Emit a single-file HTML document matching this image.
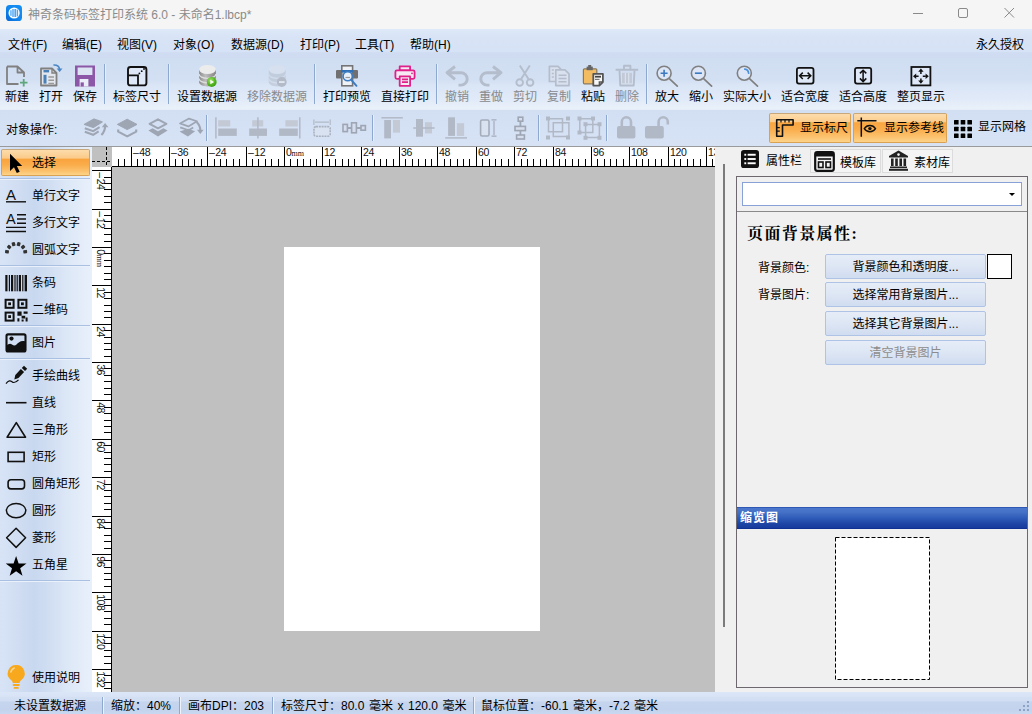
<!DOCTYPE html>
<html lang="zh-CN">
<head>
<meta charset="utf-8">
<title>神奇条码标签打印系统 6.0</title>
<style>
*{box-sizing:border-box;margin:0;padding:0}
html,body{width:1032px;height:714px;overflow:hidden}
body{position:relative;font-family:"Liberation Sans","Noto Sans CJK SC",sans-serif;font-size:12px;color:#000;background:#d4e1f4;}
.abs{position:absolute}
svg{display:block}
#title{left:0;top:0;width:1032px;height:29px;background:#f4f5f4}
#title .t{position:absolute;left:28px;top:6px;font-size:12px;color:#8a8a8a;line-height:18px;white-space:nowrap}
#menu{left:0;top:29px;width:1032px;height:29px;background:linear-gradient(#dde8f8 0,#d8e4f6 30%,#d6e2f5 78%,#cfdcf1 82%,#cedbf1 100%)}
#menu span{position:absolute;top:7px;line-height:18px;white-space:nowrap}
#tb1{left:0;top:58px;width:1032px;height:52px;background:linear-gradient(#d0def2 0,#d3e0f3 42%,#dae5f6 52%,#e1eaf8 80%,#e9f0fa 95%,#e6eef9 100%)}
.tbtn{position:absolute;top:0;height:52px;white-space:nowrap}
.tbtn .lb{position:absolute;left:-20px;right:-20px;top:31px;line-height:17px;text-align:center}
.tbtn svg{position:absolute;left:50%;top:7px;margin-left:-12px}
.dis{color:#878a8e}
.sep{position:absolute;top:6px;width:1px;height:40px;background:#8ea9d0;box-shadow:1px 0 0 #e8eff9}
#tb2{left:0;top:110px;width:1032px;height:36px;background:linear-gradient(#d2dff3 0,#d5e1f4 60%,#d7e3f5 100%)}
#tb2 .lab{position:absolute;left:6px;top:11px;line-height:18px}
.sep2{position:absolute;top:5px;width:1px;height:26px;background:#8ea9d0;box-shadow:1px 0 0 #e8eff9}
.obtn{position:absolute;top:3px;height:30px;border:1px solid #d9a253;border-top-color:#c7a77c;border-radius:2px;background:linear-gradient(#fcdcab 0,#fbcd8e 28%,#f9a640 31%,#faad4c 55%,#fcc572 85%,#fdd48a 100%)}
.obtn .lb,.pbtn .lb{position:absolute;top:5px;line-height:18px;white-space:nowrap}
.pbtn{position:absolute;top:3px;height:31px}
#topline{left:0;top:146px;width:1032px;height:1px;background:#9a9a9a}
#left{left:0;top:146px;width:92px;height:546px;background:linear-gradient(90deg,#d8e4f6 0,#d0ddf2 20%,#c8d8ef 37%,#d2dff3 56%,#dde8f7 74%,#e8f0fa 100%)}
.li{position:absolute;left:0;width:92px;height:27px}
.li .lb{position:absolute;left:32px;top:6px;line-height:18px;white-space:nowrap}
.li svg{position:absolute;left:3px;top:1px}
.hsep{position:absolute;left:0;width:90px;height:2px;background:linear-gradient(#a9c0e2 0,#a9c0e2 50%,#eaf1fa 50%,#eaf1fa 100%)}
.selbtn{position:absolute;left:1px;top:3px;width:89px;height:27px;border:1px solid #d9a253;border-top-color:#c7a77c;border-radius:2px;background:linear-gradient(#fcdcab 0,#fbca88 33%,#f9a33c 36%,#faad4c 60%,#fcc572 88%,#fdd48a 100%)}
#canvas{left:112px;top:167px;width:603px;height:525px;background:#c0c0c0}
#page{left:284px;top:247px;width:256px;height:384px;background:#fff}
#status{left:0;top:692px;width:1032px;height:22px;background:linear-gradient(#dbe6f7 0,#d8e4f6 20%,#d3e0f4 24%,#d1def3 40%,#c5d5ee 46%,#c3d3ed 80%,#c9d8f0 100%)}
#status span{position:absolute;top:5px;line-height:18px;white-space:nowrap;word-spacing:1.2px}
#status i{position:absolute;top:5px;width:1px;height:17px;background:#8ea9d0;box-shadow:1px 0 0 #eef3fb}
#right{left:715px;top:147px;width:317px;height:545px;background:#f0f0f0}
#right .split{position:absolute;left:8px;top:17px;width:2px;height:463px;background:#7b7b7b}
.tab{position:absolute;top:2px;height:24px;border:1px solid #dcdcdc;background:#f4f4f4}
.tab.act{border-color:transparent;background:transparent}
.tab .lb{position:absolute;line-height:18px;white-space:nowrap;font-size:12px}
.tab svg{position:absolute}
#box{position:absolute;left:21px;top:29px;width:292px;height:512px;border:1px solid #6c686e;}
#combo{position:absolute;left:27px;top:35px;width:280px;height:24px;background:#fff;border:1px solid #88a1d6}
#combo:after{content:"";position:absolute;right:6px;top:10px;border:3px solid transparent;border-top:3px solid #000;border-bottom:0}
#hline{position:absolute;left:22px;top:64px;width:290px;height:1px;background:#8a8a8a}
.h1{position:absolute;left:32px;top:75px;font:bold 16px/24px "Liberation Serif","Noto Serif CJK SC",serif;white-space:nowrap;letter-spacing:1.4px}
.plab{position:absolute;left:43px;line-height:18px;white-space:nowrap}
.btn{position:absolute;left:110px;width:161px;height:25px;border:1px solid #aec3e6;border-radius:2px;background:linear-gradient(#e6edf8 0,#dde6f4 50%,#d0dcf0 100%);text-align:center;line-height:25px;white-space:nowrap}
.btn.d{color:#8c8c8c}
#swatch{position:absolute;left:272px;top:107px;width:25px;height:25px;background:#fff;border:1px solid #000}
#thdr{position:absolute;left:22px;top:360px;width:290px;height:22px;background:linear-gradient(#2248aa 0,#4a78cc 7%,#4470c6 25%,#2f5cb8 50%,#1d44a4 78%,#173c9e 93%,#0c2c90 100%);color:#fff;font:bold 12px/20px "Liberation Sans","Noto Sans CJK SC",sans-serif;padding:1px 0 0 3px;letter-spacing:1px}
#thumb{position:absolute;left:120px;top:390px}
</style>
</head>
<body>
<div id="title" class="abs">
<svg class="abs" style="left:6px;top:5px" width="16" height="16" viewBox="0 0 16 16"><defs><linearGradient id="lg" x1="1" y1="0" x2="0" y2="1"><stop offset="0" stop-color="#1690f4"/><stop offset=".55" stop-color="#1186ee"/><stop offset="1" stop-color="#0868d4"/></linearGradient></defs><rect width="16" height="16" rx="3.600" fill="url(#lg)"/><circle cx="8.100" cy="8" r="5.600" fill="#fff"/><g fill="#49a4f4"><rect x="4.300" y="5.200" width="1.300" height="5.600"/><rect x="6.300" y="4" width="1.400" height="8"/><rect x="8.400" y="4" width="1.800" height="8"/><rect x="10.800" y="4.600" width="1.300" height="6.800"/></g></svg>
<div class="t">神奇条码标签打印系统 6.0 - 未命名1.lbcp*</div>
<svg class="abs" style="left:900px;top:0" width="132" height="29" viewBox="0 0 132 29"><g stroke="#8a8a8a" stroke-width="1" fill="none"><path d="M13 13.500h10"/><rect x="58.500" y="8.500" width="9" height="9" rx="1.500"/><path d="M104.500 8l9.500 9.500M114 8l-9.500 9.500"/></g></svg>
</div>
<div id="menu" class="abs">
<span style="left:8px">文件(F)</span><span style="left:62px">编辑(E)</span><span style="left:117px">视图(V)</span><span style="left:173px">对象(O)</span><span style="left:231px">数据源(D)</span><span style="left:300px">打印(P)</span><span style="left:355px">工具(T)</span><span style="left:410px">帮助(H)</span><span style="left:976px">永久授权</span>
</div>
<div id="tb1" class="abs">
<svg class="abs" style="left:0;top:0" width="1032" height="52" viewBox="0 58 1032 52"><path d="M7 66.500h10.500l6.500 6v4.500M17.500 66.500v6h6.500M7 66.500v17.500h11.500" fill="none" stroke="#808080" stroke-width="1.800" stroke-linejoin="round"/><path d="M23.700 79v7.500M20 82.700h7.500" stroke="#5fa67e" stroke-width="1.800" fill="none"/><path d="M41 68.500h11l4.500 4.500v12.500h-15.500z" fill="#e3e6ec" stroke="#808080" stroke-width="1.800" stroke-linejoin="round"/><path d="M52 68.500v4.500h4.500" fill="none" stroke="#808080" stroke-width="1.400"/><rect x="43.500" y="70" width="5.600" height="2.400" fill="#4a80b8"/><rect x="43.500" y="74.800" width="3" height="8.800" fill="#4a80b8"/><path d="M48.400 77h5.600M48.400 80.300h5.600M48.400 83.400h5.600" stroke="#9a9a9a" stroke-width="1.400"/><path d="M53.400 64.900q5.800 -.3 6.100 4.200" fill="none" stroke="#4a86c4" stroke-width="1.500"/><path d="M56.700 68.600h5.800l-2.900 3.500z" fill="#4a86c4"/><rect x="75" y="65.500" width="20" height="21" fill="#8b57a6"/><rect x="77.600" y="67.500" width="14.800" height="7.500" fill="#dbe4f3"/><rect x="79.600" y="79" width="8.800" height="7.500" fill="#e9eef8"/><rect x="80.600" y="82.400" width="3.200" height="4.100" fill="#8b57a6"/><rect x="128" y="67" width="18.400" height="18.400" rx="2.500" fill="#dfe8f7" stroke="#111" stroke-width="1.900"/><path d="M128 75.400h10v10" fill="none" stroke="#111" stroke-width="1.800"/><circle cx="139.400" cy="73.400" r=".9" fill="#111"/><circle cx="141.700" cy="71.200" r=".9" fill="#111"/><circle cx="144" cy="69" r=".9" fill="#111"/><defs><linearGradient id="cy"><stop offset="0" stop-color="#8b8b8b"/><stop offset=".38" stop-color="#bdbdbd"/><stop offset="1" stop-color="#858585"/></linearGradient><radialGradient id="gb" cx=".4" cy=".35" r=".7"><stop offset="0" stop-color="#a6e36e"/><stop offset=".6" stop-color="#55b822"/><stop offset="1" stop-color="#3c9a10"/></radialGradient></defs><g opacity="1"><path d="M199.1 69.500v12.500c0 2.600 3.800 4.400 8.400 4.400s8.400 -1.800 8.400 -4.400v-12.500z" fill="url(#cy)"/><path d="M199.1 74c0 2.600 3.800 4.400 8.400 4.400s8.400 -1.800 8.400 -4.400M199.1 78.500c0 2.600 3.800 4.400 8.400 4.400s8.400 -1.800 8.400 -4.400" fill="none" stroke="#dedede" stroke-width="1.300"/><ellipse cx="207.5" cy="69.500" rx="8.400" ry="4.500" fill="#ececec"/></g><circle cx="211.700" cy="82" r="4.900" fill="url(#gb)"/><path d="M210.300 79.700l3.800 2.300l-3.800 2.300z" fill="#fff"/><g opacity="0.42"><path d="M268.8 69.500v12.500c0 2.600 3.800 4.400 8.400 4.400s8.400 -1.800 8.400 -4.400v-12.500z" fill="#aab2c0"/><path d="M268.8 74c0 2.600 3.800 4.400 8.400 4.400s8.400 -1.800 8.400 -4.400M268.8 78.500c0 2.600 3.800 4.400 8.400 4.400s8.400 -1.800 8.400 -4.400" fill="none" stroke="#cfd5e0" stroke-width="1.300"/><ellipse cx="277.2" cy="69.500" rx="8.400" ry="4.500" fill="#dde2ea"/></g><circle cx="281.800" cy="82" r="4.900" fill="#b3bbc8"/><rect x="279" y="81.200" width="5.600" height="1.700" fill="#e8ecf3"/><rect x="336" y="70" width="22" height="8.600" rx="1" fill="#707070"/><rect x="341.800" y="65.800" width="10.800" height="20" fill="#eef1f6" stroke="#757575" stroke-width="1.600"/><rect x="341" y="70" width="12.400" height="2.600" fill="#2f6fb5"/><circle cx="347.700" cy="76.200" r="4.600" fill="#e8f0fa" stroke="#3a7cc4" stroke-width="1.600"/><path d="M345.500 77.500h4.500" stroke="#9a9a9a" stroke-width="1.200"/><path d="M351 79.600l5.500 6.200" stroke="#3a7cc4" stroke-width="1.900" stroke-linecap="round"/><g fill="#f6e9f3" stroke="#e0218a" stroke-width="1.800" stroke-linejoin="round"><rect x="399.700" y="66.400" width="10.400" height="4"/><rect x="395.400" y="70.400" width="19.200" height="8.400" rx="1.500"/><rect x="399.700" y="76.400" width="10.400" height="9.400"/></g><path d="M402 79.400h6M402 82.200h6" stroke="#e0218a" stroke-width="1.700"/><circle cx="412" cy="73.300" r=".9" fill="#e0218a"/><path d="M455 66.500l-8 6.200l8 6.600M447.500 72.700h13.500a6.200 6.200 0 0 1 0 12.400h-2.500" fill="none" stroke="#b4bdcb" stroke-width="2.900" stroke-linejoin="round"/><path d="M493 66.500l8 6.200l-8 6.600M500.500 72.700h-13.500a6.200 6.200 0 0 0 0 12.400h2.500" fill="none" stroke="#b4bdcb" stroke-width="2.900" stroke-linejoin="round"/><g fill="none" stroke="#b4bdcb" stroke-width="1.900"><path d="M519.800 65.500l8.700 13.500M529.800 65.500l-8.700 13.500"/><circle cx="519.700" cy="82.500" r="3.300"/><circle cx="530.100" cy="82.500" r="3.300"/></g><g fill="#d9e1ef" stroke="#b4bdcb" stroke-width="1.700" stroke-linejoin="round"><path d="M549.400 66.300h8.600l3 3v12.200h-11.600z"/><path d="M555.800 69.800h9.200l4 4v11.800h-13.200z"/></g><path d="M558.500 75.200h8M558.500 78.500h8M558.500 81.800h8" stroke="#b4bdcb" stroke-width="1.400"/><path d="M551.800 70h2M551.800 73.500h2M551.800 77h2" stroke="#b4bdcb" stroke-width="1.300"/><rect x="583.400" y="68.800" width="13.400" height="15" rx="1" fill="#f3bc63" stroke="#8a7a5a" stroke-width="1.200"/><rect x="586.600" y="66.600" width="6.200" height="3.600" fill="#666"/><rect x="588.200" y="65" width="3" height="2.400" fill="#666"/><path d="M593.300 73.800h9.600v8.200l-3.600 3.600h-6z" fill="#f7f7f7" stroke="#555" stroke-width="1.800" stroke-linejoin="round"/><path d="M602.900 82h-3.600v3.600" fill="none" stroke="#555" stroke-width="1.300"/><path d="M595 76.700h6" stroke="#444" stroke-width="1.800"/><path d="M595 79.400h4.500" stroke="#777" stroke-width="1.200"/><g fill="none" stroke="#b4bdcb" stroke-width="1.900" stroke-linejoin="round"><path d="M615.600 69.800h22.600M624 69.300v-3.500h6.400v3.500"/><path d="M619.500 70.500l.8 15h13.400l.8 -15"/></g><rect x="622" y="72.800" width="10" height="10.600" fill="#c3cad7"/><path d="M625.400 73v10.400M628.700 73v10.400" stroke="#dbe2ee" stroke-width="1.200"/><circle cx="664.1" cy="73.200" r="7" fill="#dce6f6" stroke="#808080" stroke-width="1.600"/><path d="M669.3000000000001 78.600l8 7.500" stroke="#808080" stroke-width="1.700" stroke-linecap="round"/><path d="M660.600 73.200h7M664.100 69.700v7" stroke="#3a78c0" stroke-width="1.600"/><circle cx="698.4" cy="73.200" r="7" fill="#dce6f6" stroke="#808080" stroke-width="1.600"/><path d="M703.6 78.600l8 7.500" stroke="#808080" stroke-width="1.700" stroke-linecap="round"/><path d="M694.900 73.200h7" stroke="#3a78c0" stroke-width="1.600"/><circle cx="744.3" cy="73.200" r="7" fill="#dce6f6" stroke="#808080" stroke-width="1.600"/><path d="M749.5 78.600l8 7.500" stroke="#808080" stroke-width="1.700" stroke-linecap="round"/><path d="M744.800 69.200a4.300 4.300 0 0 1 3.800 4" fill="none" stroke="#4a8fdc" stroke-width="1.700" stroke-linecap="round"/><rect x="796.900" y="67.800" width="16.600" height="15.800" rx="2" fill="#dfe8f7" stroke="#111" stroke-width="1.800"/><path d="M800 75.800h10.500M802.800 72.600l-3.200 3.200l3.200 3.200M807.600 72.600l3.200 3.200l-3.200 3.200" fill="none" stroke="#111" stroke-width="1.500"/><rect x="855" y="67.800" width="16.200" height="15.800" rx="2" fill="#dfe8f7" stroke="#111" stroke-width="1.800"/><path d="M863.100 70.600v10.600M859.900 73.400l3.200 -3.200l3.200 3.200M859.900 78.400l3.200 3.200l3.200 -3.200" fill="none" stroke="#111" stroke-width="1.500"/><rect x="911.400" y="67" width="19" height="18.400" fill="#dfe8f7" stroke="#111" stroke-width="1.800"/><path d="M920.900 68.600l2.700 3.200h-5.400zM920.900 83.800l2.700 -3.200h-5.400zM913 76.200l3.200 -2.700v5.400zM928.800 76.200l-3.200 -2.700v5.400z" fill="#111"/><path d="M920.900 71v3M920.900 78.400v3M915.600 76.200h3M922.800 76.200h3" stroke="#111" stroke-width="1.500"/></svg>
<div class="tbtn" style="left:0px;width:34px"><div class="lb">新建</div></div>
<div class="tbtn" style="left:34px;width:34px"><div class="lb">打开</div></div>
<div class="tbtn" style="left:68px;width:34px"><div class="lb">保存</div></div>
<div class="sep" style="left:104px"></div>
<div class="tbtn" style="left:108px;width:58px"><div class="lb">标签尺寸</div></div>
<div class="sep" style="left:168px"></div>
<div class="tbtn" style="left:172px;width:70px"><div class="lb">设置数据源</div></div>
<div class="tbtn dis" style="left:242px;width:70px"><div class="lb">移除数据源</div></div>
<div class="sep" style="left:314px"></div>
<div class="tbtn" style="left:318px;width:58px"><div class="lb">打印预览</div></div>
<div class="tbtn" style="left:376px;width:58px"><div class="lb">直接打印</div></div>
<div class="sep" style="left:436px"></div>
<div class="tbtn dis" style="left:440px;width:34px"><div class="lb">撤销</div></div>
<div class="tbtn dis" style="left:474px;width:34px"><div class="lb">重做</div></div>
<div class="tbtn dis" style="left:508px;width:34px"><div class="lb">剪切</div></div>
<div class="tbtn dis" style="left:542px;width:34px"><div class="lb">复制</div></div>
<div class="tbtn" style="left:576px;width:34px"><div class="lb">粘贴</div></div>
<div class="tbtn dis" style="left:610px;width:34px"><div class="lb">删除</div></div>
<div class="sep" style="left:646px"></div>
<div class="tbtn" style="left:650px;width:34px"><div class="lb">放大</div></div>
<div class="tbtn" style="left:684px;width:34px"><div class="lb">缩小</div></div>
<div class="tbtn" style="left:718px;width:58px"><div class="lb">实际大小</div></div>
<div class="tbtn" style="left:776px;width:58px"><div class="lb">适合宽度</div></div>
<div class="tbtn" style="left:834px;width:58px"><div class="lb">适合高度</div></div>
<div class="tbtn" style="left:892px;width:58px"><div class="lb">整页显示</div></div>
</div>
<div id="tb2" class="abs">
<div class="lab">对象操作:</div>
<svg class="abs" style="left:0;top:0" width="700" height="36" viewBox="0 110 700 36"><path d="M84.600 124.400l9.400 -5.200l8 2.800l-8.800 5.400z" fill="#9ea6b4" stroke="#9ea6b4" stroke-width="1.400" stroke-linejoin="round"/><path d="M84.800 128.200l8.400 3l6.400 -4M84.800 131.800l8.400 3l5.400 -3.400" fill="none" stroke="#9ea6b4" stroke-width="2"/><path d="M101.400 135c2.600 -2.600 3.700 -5.200 3.700 -9" fill="none" stroke="#9ea6b4" stroke-width="2.100"/><path d="M101.800 127.200l3.300 -4.200l3.300 4.200z" fill="#9ea6b4"/><path d="M117.400 124.400l9.800 -5.200l9.800 5.200l-9.800 5.200z" fill="#9ea6b4" stroke="#9ea6b4" stroke-width="1" stroke-linejoin="round"/><path d="M118.200 129.600v2l9 4.800l9 -4.800v-2" fill="none" stroke="#9ea6b4" stroke-width="2.200" stroke-linejoin="round"/><path d="M149.600 123.800l8.400 -4.500l8.400 4.500l-8.400 4.500z" fill="none" stroke="#9ea6b4" stroke-width="2" stroke-linejoin="round"/><path d="M148.400 130.400l4.200 -2.200l5.400 3l5.400 -3l4.200 2.200l-9.600 6.200z" fill="#9ea6b4"/><path d="M180 123.400l9 -4.800l8 2.600l-8.600 5.200zM180.200 127.400l8.400 2.800l4.600 -2.800" fill="none" stroke="#9ea6b4" stroke-width="1.700" stroke-linejoin="round"/><path d="M179.600 131.400l8.500 -2.600l7 2.400l-7.200 5.200z" fill="#9ea6b4"/><path d="M196.600 122c2.600 2.400 3.700 4.800 3.700 8.400" fill="none" stroke="#9ea6b4" stroke-width="2.100"/><path d="M197 129.800l3.300 4.200l3.300 -4.200z" fill="#9ea6b4"/><path d="M215.900 117.300v21.200" stroke="#b2b9c6" stroke-width="1.500"/><rect x="218.200" y="120.200" width="12" height="6.300" fill="#c3c9d5"/><rect x="218.200" y="128.500" width="18.600" height="7.400" fill="#b2b9c6"/><rect x="252.200" y="120.200" width="11" height="6.300" fill="#c3c9d5"/><rect x="249.200" y="128.500" width="17.800" height="7.400" fill="#b2b9c6"/><path d="M257.900 117.300v21.200" stroke="#b2b9c6" stroke-width="1.500"/><path d="M299.800 117.300v21.200" stroke="#b2b9c6" stroke-width="1.500"/><rect x="285.400" y="120.200" width="12.400" height="6.300" fill="#c3c9d5"/><rect x="279.200" y="128.500" width="18.600" height="7.400" fill="#b2b9c6"/><path d="M313.900 119.500v5.500M330.200 119.500v5.500M315 122.200h14" stroke="#b2b9c6" stroke-width="1.200" fill="none"/><rect x="314" y="126.600" width="16.200" height="9.600" rx="2" fill="#d9e2f1" stroke="#a9b1be" stroke-width="1.600" stroke-dasharray="2 .8"/><g fill="#d5deee" stroke="#9ea6b4" stroke-width="1.600"><rect x="343" y="124.400" width="4.400" height="7.200"/><rect x="351.600" y="122.800" width="4.800" height="10"/><rect x="361" y="125.600" width="4.400" height="4.600"/></g><path d="M347.400 128h4.200M356.400 128h4.600" stroke="#9ea6b4" stroke-width="1.800"/><path d="M381.400 117.800h21.400" stroke="#b2b9c6" stroke-width="1.500"/><rect x="384.200" y="120" width="6.800" height="18.400" fill="#b2b9c6"/><rect x="393" y="120" width="7" height="12.600" fill="#c3c9d5"/><rect x="416" y="119" width="7" height="17.700" fill="#b2b9c6"/><rect x="425" y="122.200" width="7" height="11.200" fill="#c3c9d5"/><path d="M413.200 128h21.400" stroke="#b2b9c6" stroke-width="1.500"/><path d="M445.200 137.900h21.800" stroke="#b2b9c6" stroke-width="1.500"/><rect x="448.100" y="117.300" width="6.900" height="18.600" fill="#b2b9c6"/><rect x="456.900" y="123.200" width="7.200" height="12.700" fill="#c3c9d5"/><rect x="480.600" y="120" width="8.400" height="16" rx="1.500" fill="#d9e2f1" stroke="#a4acba" stroke-width="1.600"/><path d="M491.500 119.800h5M491.500 136.200h5M494 121v14" stroke="#a4acba" stroke-width="1.200" fill="none"/><g fill="#d5deee" stroke="#9ea6b4" stroke-width="1.600"><rect x="518.200" y="117.200" width="4.600" height="4"/><rect x="515" y="126.400" width="10.400" height="4.200"/><rect x="516.600" y="135" width="7.800" height="4"/></g><path d="M520.400 121.200v5.200M520.400 130.600v4.400" stroke="#9ea6b4" stroke-width="1.800"/><path d="M548.500 118.800h14v13h-14zM553.300 122.800h15.600v13.800h-15.600z" fill="none" stroke="#b2b9c6" stroke-width="1.500"/><rect x="546" y="116.5" width="4" height="4" fill="#b2b9c6"/><rect x="566" y="116.5" width="4" height="4" fill="#b2b9c6"/><rect x="546" y="135.5" width="4" height="4" fill="#b2b9c6"/><rect x="566" y="135.5" width="4" height="4" fill="#b2b9c6"/><path d="M579.800 118.800h13v13.800h-13zM585.600 124.400h13.800v13h-13.800z" fill="none" stroke="#b2b9c6" stroke-width="1.500"/><rect x="577.5" y="116.5" width="4" height="4" fill="#b2b9c6"/><rect x="591" y="116.5" width="4" height="4" fill="#b2b9c6"/><rect x="577.5" y="130.5" width="4" height="4" fill="#b2b9c6"/><rect x="583.5" y="122.2" width="4" height="4" fill="#b2b9c6"/><rect x="597.5" y="122.2" width="4" height="4" fill="#b2b9c6"/><rect x="583.5" y="135.8" width="4" height="4" fill="#b2b9c6"/><rect x="597.5" y="135.8" width="4" height="4" fill="#b2b9c6"/><path d="M621.800 126v-4.200a4.600 4.600 0 0 1 9.200 0v4.200" fill="none" stroke="#b2b9c6" stroke-width="2.600"/><rect x="617" y="126" width="18.400" height="12.600" rx="2" fill="#b2b9c6"/><path d="M658.600 126v-4.200a4.600 4.600 0 0 1 9.200 0v2.800" fill="none" stroke="#b2b9c6" stroke-width="2.600"/><rect x="645" y="126" width="18.800" height="12.600" rx="2" fill="#b2b9c6"/></svg>
<div class="sep2" style="left:206px"></div>
<div class="sep2" style="left:372px"></div>
<div class="sep2" style="left:538px"></div>
<div class="sep2" style="left:606px"></div>
<div class="obtn" style="left:769px;width:82px"><svg class="abs" style="left:0;top:0" width="40" height="31" viewBox="770 114 40 31"><path d="M776.700 119.800h16.400v5.200h-10.600v11.200h-5.800z" fill="none" stroke="#111" stroke-width="1.600" stroke-linejoin="round"/><path d="M781 120v2.600M785 120v2.600M789 120v2.600M777 127.600h2.800M777 131.200h2.800" stroke="#111" stroke-width="1.200"/></svg><div class="lb" style="left:30px">显示标尺</div></div>
<div class="obtn" style="left:853px;width:94px"><svg class="abs" style="left:0;top:0" width="40" height="31" viewBox="854 114 40 31"><path d="M857.300 120.700h19.200M861.300 117.400v19.400" stroke="#111" stroke-width="1.500"/><path d="M864.300 128.600c2.600 -4.200 8.600 -4.200 11.200 0c-2.600 4.200 -8.600 4.200 -11.200 0z" fill="none" stroke="#111" stroke-width="1.400"/><circle cx="869.900" cy="128.600" r="1.700" fill="#111"/></svg><div class="lb" style="left:30px">显示参考线</div></div>
<div class="pbtn" style="left:950px;width:80px"><svg class="abs" style="left:4px;top:6.500px" width="18" height="18" viewBox="0 0 18 18"><g fill="#000"><rect x="0" y="0" width="4.600" height="4.600" rx=".5"/><rect x="6.7" y="0" width="4.600" height="4.600" rx=".5"/><rect x="13.4" y="0" width="4.600" height="4.600" rx=".5"/><rect x="0" y="6.7" width="4.600" height="4.600" rx=".5"/><rect x="6.7" y="6.7" width="4.600" height="4.600" rx=".5"/><rect x="13.4" y="6.7" width="4.600" height="4.600" rx=".5"/><rect x="0" y="13.4" width="4.600" height="4.600" rx=".5"/><rect x="6.7" y="13.4" width="4.600" height="4.600" rx=".5"/><rect x="13.4" y="13.4" width="4.600" height="4.600" rx=".5"/></g></svg><div class="lb" style="left:28px">显示网格</div></div>
</div>
<div id="left" class="abs">
<div class="selbtn"></div>
<svg class="abs" style="left:0;top:0" width="92" height="546" viewBox="0 146 92 546"><path d="M10 153.800v17.200l4 -3.700l2.800 5.800l2.900 -1.400l-2.800 -5.700h5.300z" fill="#000"/><text x="6" y="199.600" font-size="15" font-family="Liberation Sans,sans-serif" fill="#111">A</text><path d="M6 201.800h20" stroke="#111" stroke-width="1.400"/><text x="6" y="224.400" font-size="14.500" font-family="Liberation Sans,sans-serif" fill="#111">A</text><path d="M17 214.800h9M17 219h9M17 223.200h9M6 227.400h20M6 231.500h20" stroke="#111" stroke-width="1.400"/><rect x="23.51" y="249.82" width="3.400" height="3.800" rx=".8" fill="#333" transform="rotate(82 25.21 251.72)"/><rect x="21.34" y="245.06" width="3.400" height="3.800" rx=".8" fill="#333" transform="rotate(49 23.04 246.96)"/><rect x="16.94" y="242.26" width="3.400" height="3.800" rx=".8" fill="#333" transform="rotate(16 18.64 244.16)"/><rect x="11.86" y="242.26" width="3.400" height="3.800" rx=".8" fill="#333" transform="rotate(-16 13.56 244.16)"/><rect x="7.46" y="245.06" width="3.400" height="3.800" rx=".8" fill="#333" transform="rotate(-49 9.16 246.96)"/><rect x="5.29" y="249.82" width="3.400" height="3.800" rx=".8" fill="#333" transform="rotate(-82 6.99 251.72)"/><rect x="5.3" y="275" width="2.2" height="16.300" fill="#111"/><rect x="8.8" y="275" width="1.2" height="16.300" fill="#111"/><rect x="11" y="275" width="2.2" height="16.300" fill="#111"/><rect x="14.4" y="275" width="1.2" height="16.300" fill="#111"/><rect x="16.6" y="275" width="1.2" height="16.300" fill="#111"/><rect x="18.8" y="275" width="2.2" height="16.300" fill="#111"/><rect x="22.2" y="275" width="1.2" height="16.300" fill="#111"/><rect x="24.6" y="275" width="2.4" height="16.300" fill="#111"/><rect x="5.6" y="299.8" width="8" height="8" fill="none" stroke="#111" stroke-width="2"/><rect x="8.2" y="302.40000000000003" width="2.800" height="2.800" fill="#111"/><rect x="18.4" y="299.8" width="8" height="8" fill="none" stroke="#111" stroke-width="2"/><rect x="21.0" y="302.40000000000003" width="2.800" height="2.800" fill="#111"/><rect x="5.6" y="312.6" width="8" height="8" fill="none" stroke="#111" stroke-width="2"/><rect x="8.2" y="315.20000000000005" width="2.800" height="2.800" fill="#111"/><path d="M17.400 311.600h4.200v4.200h-4.200zM23.600 311.600h4v2.200h-4zM21.600 315.800h3.600v2.600h-3.600zM17.400 318.200h2v3.400h-2zM21.600 319.600h2v2h-2zM25.600 317.600h2v4h-2z" fill="#111"/><rect x="6.500" y="334.400" width="19" height="17" rx="1.500" fill="none" stroke="#111" stroke-width="2.100"/><circle cx="11.500" cy="338.600" r="2.100" fill="#111"/><path d="M6.500 345.500c2 -1.500 3.500 -2.500 5.500 -1c1.500 1.200 3 1.500 4.500 0c2 -2 4.500 -4.500 9 -3v10h-19z" fill="#111"/><path d="M14.300 379.400l1 -4.400l5.600 -6l3.200 3l-5.600 6z" fill="#111"/><path d="M21.800 368l2.200 -2.200l3.200 3l-2.200 2.200z" fill="#111"/><path d="M6 383.600c2.500 -3.500 4.500 -3 6 -1.800s3.800 .8 6.500 -2" fill="none" stroke="#111" stroke-width="1.200"/><path d="M6 402.700h20.500" stroke="#111" stroke-width="1.600"/><path d="M16.300 422.600l9.200 14.600h-18.400z" fill="none" stroke="#111" stroke-width="1.600" stroke-linejoin="round"/><rect x="8.100" y="452.300" width="16" height="9.200" fill="none" stroke="#111" stroke-width="1.600"/><rect x="8.100" y="479.700" width="16.400" height="9.200" rx="2.800" fill="none" stroke="#111" stroke-width="1.600"/><ellipse cx="16.100" cy="510.600" rx="9.700" ry="7.200" fill="none" stroke="#111" stroke-width="1.500"/><path d="M16.100 528.200l9.500 9.600l-9.500 9.600l-9.500 -9.600z" fill="none" stroke="#111" stroke-width="1.500" stroke-linejoin="round"/><polygon points="16.10,556.00 18.63,563.42 26.47,563.53 20.19,568.23 22.51,575.72 16.10,571.20 9.69,575.72 12.01,568.23 5.73,563.53 13.57,563.42" fill="#000"/><path d="M16.200 665a8.400 8.400 0 0 0 -5 15.200c1 .8 1.500 1.700 1.600 2.800h6.800c.1 -1.100 .6 -2 1.600 -2.800a8.400 8.400 0 0 0 -5 -15.200z" fill="#f8a81c"/><rect x="12.600" y="684" width="7.200" height="2" rx="1" fill="#f8a81c"/><rect x="13.600" y="687" width="5.200" height="1.800" rx=".9" fill="#f8a81c"/><path d="M10.800 672a6 6 0 0 1 3.400 -4" fill="none" stroke="#fcd794" stroke-width="1.500" stroke-linecap="round"/></svg>
<div class="li" style="top:2px"><div class="lb">选择</div></div>
<div class="li" style="top:35px"><div class="lb">单行文字</div></div>
<div class="li" style="top:62px"><div class="lb">多行文字</div></div>
<div class="li" style="top:89px"><div class="lb">圆弧文字</div></div>
<div class="li" style="top:122px"><div class="lb">条码</div></div>
<div class="li" style="top:149px"><div class="lb">二维码</div></div>
<div class="li" style="top:182px"><div class="lb">图片</div></div>
<div class="li" style="top:215px"><div class="lb">手绘曲线</div></div>
<div class="li" style="top:242px"><div class="lb">直线</div></div>
<div class="li" style="top:269px"><div class="lb">三角形</div></div>
<div class="li" style="top:296px"><div class="lb">矩形</div></div>
<div class="li" style="top:323px"><div class="lb">圆角矩形</div></div>
<div class="li" style="top:350px"><div class="lb">圆形</div></div>
<div class="li" style="top:377px"><div class="lb">菱形</div></div>
<div class="li" style="top:404px"><div class="lb">五角星</div></div>
<div class="li" style="top:517px"><div class="lb">使用说明</div></div>
<div class="hsep" style="top:32px"></div>
<div class="hsep" style="top:119px"></div>
<div class="hsep" style="top:179px"></div>
<div class="hsep" style="top:212px"></div>
<div class="hsep" style="top:434px"></div>
</div>
<div id="right" class="abs">
<div class="split"></div>
<div class="tab act" style="left:19px;width:76px"><svg style="left:6px;top:0px" width="18" height="18" viewBox="0 0 19 19"><rect width="19" height="19" rx="3" fill="#111"/><g fill="#fff"><rect x="3.500" y="4" width="2" height="2"/><rect x="7" y="4" width="8.500" height="2"/><rect x="3.500" y="8.500" width="2" height="2"/><rect x="7" y="8.500" width="8.500" height="2"/><rect x="3.500" y="13" width="2" height="2"/><rect x="7" y="13" width="8.500" height="2"/></g></svg><div class="lb" style="left:31px;top:2px">属性栏</div></div>
<div class="tab" style="left:95px;width:71px"><svg style="left:3px;top:1px" width="21" height="21" viewBox="0 0 21 21"><rect x="1.200" y="1.200" width="18.600" height="18.600" rx="2" fill="none" stroke="#111" stroke-width="2.200"/><rect x="1" y="1" width="19" height="4.500" fill="#111"/><path d="M4 8h13" stroke="#111" stroke-width="1.600"/><rect x="4.500" y="11" width="4.500" height="5.500" fill="none" stroke="#111" stroke-width="1.600"/><rect x="12" y="11" width="4.500" height="5.500" fill="none" stroke="#111" stroke-width="1.600"/></svg><div class="lb" style="left:29px;top:4px">模板库</div></div>
<div class="tab" style="left:167px;width:71px"><svg style="left:5px;top:0px" width="21" height="21" viewBox="0 0 21 21"><path d="M10.500 0.500l9.500 5.500v1.500h-19v-1.500z" fill="#222"/><circle cx="10.500" cy="4.600" r="1.300" fill="#f4f4f4"/><g fill="#222"><rect x="3" y="8.500" width="2.600" height="7.500"/><rect x="7.200" y="8.500" width="2.600" height="7.500"/><rect x="11.400" y="8.500" width="2.600" height="7.500"/><rect x="15.500" y="8.500" width="2.600" height="7.500"/><rect x="2" y="16.500" width="17" height="1.600"/><rect x="1" y="18.800" width="19" height="2"/></g></svg><div class="lb" style="left:31px;top:4px">素材库</div></div>
<div id="box"></div>
<div id="combo"></div>
<div id="hline"></div>
<div class="h1">页面背景属性:</div>
<div class="plab" style="top:112px">背景颜色:</div>
<div class="plab" style="top:139px">背景图片:</div>
<div class="btn" style="top:107px">背景颜色和透明度...</div>
<div id="swatch"></div>
<div class="btn" style="top:135px">选择常用背景图片...</div>
<div class="btn" style="top:164px">选择其它背景图片...</div>
<div class="btn d" style="top:193px">清空背景图片</div>
<div id="thdr">缩览图</div>
<svg id="thumb" width="95" height="143" viewBox="0 0 95 143"><rect x=".5" y=".5" width="94" height="142" fill="#fff" stroke="#000" stroke-width="1" stroke-dasharray="4 2"/></svg>
</div>
<div id="canvas" class="abs"></div>
<div id="page" class="abs"></div>
<svg class="abs" style="left:92px;top:147px" width="20" height="20" viewBox="0 0 20 20"><rect width="20" height="20" fill="#c0c0c0"/><path d="M14.500 0v20M0 14.500h20" stroke="#000" stroke-width="1" stroke-dasharray="3 2" fill="none"/></svg>
<svg class="abs" style="left:112px;top:147px" width="603" height="20" viewBox="0 0 603 20"><rect width="603" height="20" fill="#fff"/><path d="M6.5 12v7M12.5 12v7M19.5 0v19M25.5 12v7M31.5 12v7M38.5 12v7M44.5 12v7M51.5 12v7M57.5 0v19M63.5 12v7M70.5 12v7M76.5 12v7M82.5 12v7M89.5 12v7M95.5 0v19M102.5 12v7M108.5 12v7M114.5 12v7M121.5 12v7M127.5 12v7M134.5 0v19M140.5 12v7M146.5 12v7M153.5 12v7M159.5 12v7M166.5 12v7M172.5 0v19M178.5 12v7M185.5 12v7M191.5 12v7M198.5 12v7M204.5 12v7M210.5 0v19M217.5 12v7M223.5 12v7M230.5 12v7M236.5 12v7M242.5 12v7M249.5 0v19M255.5 12v7M262.5 12v7M268.5 12v7M274.5 12v7M281.5 12v7M287.5 0v19M293.5 12v7M300.5 12v7M306.5 12v7M313.5 12v7M319.5 12v7M325.5 0v19M332.5 12v7M338.5 12v7M345.5 12v7M351.5 12v7M357.5 12v7M364.5 0v19M370.5 12v7M377.5 12v7M383.5 12v7M389.5 12v7M396.5 12v7M402.5 0v19M409.5 12v7M415.5 12v7M421.5 12v7M428.5 12v7M434.5 12v7M441.5 0v19M447.5 12v7M453.5 12v7M460.5 12v7M466.5 12v7M473.5 12v7M479.5 0v19M485.5 12v7M492.5 12v7M498.5 12v7M504.5 12v7M511.5 12v7M517.5 0v19M524.5 12v7M530.5 12v7M536.5 12v7M543.5 12v7M549.5 12v7M556.5 0v19M562.5 12v7M568.5 12v7M575.5 12v7M581.5 12v7M588.5 12v7M594.5 0v19M600.5 12v7M0 19.500h603" stroke="#000" stroke-width="1" fill="none"/><g font-size="10.500" letter-spacing="-.3" font-family="Liberation Sans,sans-serif" fill="#111"><text x="21.0" y="8.700">–<tspan dx=".7">48</tspan></text><text x="59.0" y="8.700">–<tspan dx=".7">36</tspan></text><text x="97.0" y="8.700">–<tspan dx=".7">24</tspan></text><text x="136.0" y="8.700">–<tspan dx=".7">12</tspan></text><text x="174.0" y="8.700">0<tspan font-size="8" letter-spacing="0" font-family="Liberation Serif,serif">mm</tspan></text><text x="212.0" y="8.700">12</text><text x="251.0" y="8.700">24</text><text x="289.0" y="8.700">36</text><text x="327.0" y="8.700">48</text><text x="366.0" y="8.700">60</text><text x="404.0" y="8.700">72</text><text x="443.0" y="8.700">84</text><text x="481.0" y="8.700">96</text><text x="519.0" y="8.700">108</text><text x="558.0" y="8.700">120</text><text x="596.0" y="8.700">132</text></g></svg>
<svg class="abs" style="left:92px;top:167px" width="20" height="525" viewBox="0 0 20 525"><rect width="20" height="525" fill="#fff"/><path d="M0 3.5h19M12 10.5h7M12 16.5h7M12 22.5h7M12 29.5h7M12 35.5h7M0 42.5h19M12 48.5h7M12 54.5h7M12 61.5h7M12 67.5h7M12 74.5h7M0 80.5h19M12 86.5h7M12 93.5h7M12 99.5h7M12 106.5h7M12 112.5h7M0 118.5h19M12 125.5h7M12 131.5h7M12 138.5h7M12 144.5h7M12 150.5h7M0 157.5h19M12 163.5h7M12 170.5h7M12 176.5h7M12 182.5h7M12 189.5h7M0 195.5h19M12 201.5h7M12 208.5h7M12 214.5h7M12 221.5h7M12 227.5h7M0 233.5h19M12 240.5h7M12 246.5h7M12 253.5h7M12 259.5h7M12 265.5h7M0 272.5h19M12 278.5h7M12 285.5h7M12 291.5h7M12 297.5h7M12 304.5h7M0 310.5h19M12 317.5h7M12 323.5h7M12 329.5h7M12 336.5h7M12 342.5h7M0 349.5h19M12 355.5h7M12 361.5h7M12 368.5h7M12 374.5h7M12 381.5h7M0 387.5h19M12 393.5h7M12 400.5h7M12 406.5h7M12 412.5h7M12 419.5h7M0 425.5h19M12 432.5h7M12 438.5h7M12 444.5h7M12 451.5h7M12 457.5h7M0 464.5h19M12 470.5h7M12 476.5h7M12 483.5h7M12 489.5h7M12 496.5h7M0 502.5h19M12 508.5h7M12 515.5h7M12 521.5h7M19.500 0v525" stroke="#000" stroke-width="1" fill="none"/><g font-size="10.500" letter-spacing="-.55" font-family="Liberation Sans,sans-serif" fill="#111"><text transform="translate(4.700 5.3) rotate(90)">–<tspan dx="1.2">24</tspan></text><text transform="translate(4.700 44.3) rotate(90)">–<tspan dx="1.2">12</tspan></text><text transform="translate(4.700 82.3) rotate(90)">0<tspan font-size="8" letter-spacing="0" font-family="Liberation Serif,serif">mm</tspan></text><text transform="translate(4.700 120.3) rotate(90)">12</text><text transform="translate(4.700 159.3) rotate(90)">24</text><text transform="translate(4.700 197.3) rotate(90)">36</text><text transform="translate(4.700 235.3) rotate(90)">48</text><text transform="translate(4.700 274.3) rotate(90)">60</text><text transform="translate(4.700 312.3) rotate(90)">72</text><text transform="translate(4.700 351.3) rotate(90)">84</text><text transform="translate(4.700 389.3) rotate(90)">96</text><text transform="translate(4.700 427.3) rotate(90)">108</text><text transform="translate(4.700 466.3) rotate(90)">120</text><text transform="translate(4.700 504.3) rotate(90)">132</text></g></svg>
<div id="topline" class="abs"></div>
<div id="status" class="abs">
<span style="left:14px">未设置数据源</span><i style="left:102px"></i><span style="left:111px">缩放：40%</span><i style="left:179px"></i><span style="left:188px">画布DPI：203</span><i style="left:272px"></i><span style="left:281px">标签尺寸：80.0 毫米 x 120.0 毫米</span><i style="left:473px"></i><span style="left:481px">鼠标位置：-60.1 毫米，-7.2 毫米</span>
<svg class="abs" style="left:1019px;top:9px" width="12" height="12" viewBox="0 0 12 12"><g fill="#8ea3c8"><rect x="8" y="0" width="2" height="2"/><rect x="4" y="4" width="2" height="2"/><rect x="8" y="4" width="2" height="2"/><rect x="0" y="8" width="2" height="2"/><rect x="4" y="8" width="2" height="2"/><rect x="8" y="8" width="2" height="2"/></g></svg>
</div>
</body>
</html>
